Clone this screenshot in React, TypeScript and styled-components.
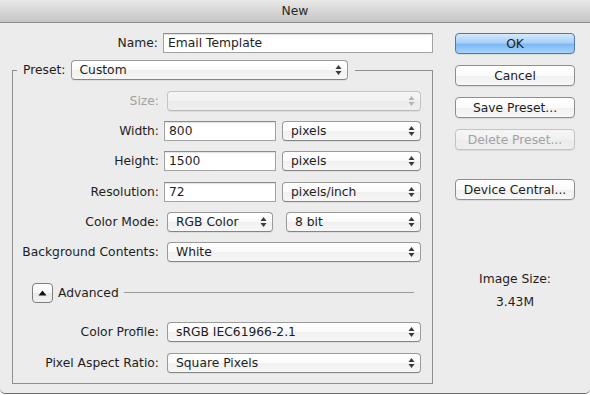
import React from "react";
import { styled, createGlobalStyle } from "styled-components";

const GlobalStyle = createGlobalStyle`
  html, body {
    margin: 0;
    padding: 0;
    background: #ffffff;
  }
  body {
    font-family: "DejaVu Sans", "Liberation Sans", sans-serif;
    font-size: 12.3px;
    color: #1e1e1e;
  }
`;

const Arrows = ({ dim }: { dim?: boolean }) => (
  <svg width="7" height="12" viewBox="0 0 7 12">
    <path d="M3.5 1 L6.5 5 L0.5 5 Z" fill={dim ? "#b4b4b4" : "#3a3a3a"} />
    <path d="M3.5 11 L6.5 7 L0.5 7 Z" fill={dim ? "#b4b4b4" : "#3a3a3a"} />
  </svg>
);

type PopupProps = {
  label?: string;
  width: number;
  disabled?: boolean;
  offset?: number;
};

const Popup = ({ label, width, disabled, offset = 0 }: PopupProps) => (
  <PopupBox $w={width} $off={offset} $disabled={disabled}>
    <span>{label}</span>
    <Arrows dim={disabled} />
  </PopupBox>
);

export default function App() {
  return (
    <>
      <GlobalStyle />
      <Window>
        <TitleBar>New</TitleBar>
        <Body>
          <LeftCol>
            <NameRow>
              <Label>Name:</Label>
              <TextField $w={270}>Email Template</TextField>
            </NameRow>
            <Fieldset>
              <Legend>
                <LegendLabel>Preset:</LegendLabel>
                <Popup label="Custom" width={277} />
              </Legend>
              <Rows>
                <Row>
                  <Label $disabled>Size:</Label>
                  <Popup width={254} offset={3} disabled />
                </Row>
                <Row>
                  <Label>Width:</Label>
                  <TextField $w={112}>800</TextField>
                  <Popup label="pixels" width={139} offset={6} />
                </Row>
                <Row>
                  <Label>Height:</Label>
                  <TextField $w={112}>1500</TextField>
                  <Popup label="pixels" width={139} offset={6} />
                </Row>
                <Row>
                  <Label>Resolution:</Label>
                  <TextField $w={112}>72</TextField>
                  <Popup label="pixels/inch" width={139} offset={6} />
                </Row>
                <Row>
                  <Label>Color Mode:</Label>
                  <Popup label="RGB Color" width={106} offset={3} />
                  <Popup label="8 bit" width={135} offset={13} />
                </Row>
                <Row>
                  <Label>Background Contents:</Label>
                  <Popup label="White" width={254} offset={3} />
                </Row>
              </Rows>
              <AdvancedRow>
                <Disclosure>
                  <svg width="9" height="6" viewBox="0 0 9 6">
                    <path d="M4.5 0.5 L8.5 5.5 L0.5 5.5 Z" fill="#111" />
                  </svg>
                </Disclosure>
                <AdvancedText>Advanced</AdvancedText>
                <Rule />
              </AdvancedRow>
              <AdvancedRows>
                <Row>
                  <Label>Color Profile:</Label>
                  <Popup label="sRGB IEC61966-2.1" width={254} offset={3} />
                </Row>
                <Row>
                  <Label>Pixel Aspect Ratio:</Label>
                  <Popup label="Square Pixels" width={254} offset={3} />
                </Row>
              </AdvancedRows>
            </Fieldset>
          </LeftCol>
          <RightCol>
            <Button $primary>OK</Button>
            <Button>Cancel</Button>
            <Button>Save Preset...</Button>
            <Button $disabled>Delete Preset...</Button>
            <Button $gap={29}>Device Central...</Button>
            <SizeInfo>
              <span>Image Size:</span>
              <span>3.43M</span>
            </SizeInfo>
          </RightCol>
        </Body>
      </Window>
    </>
  );
}

const Window = styled.div`
  width: 590px;
  height: 393px;
  background: #ececec;
  border-bottom: 1px solid #6e6e6e;
  border-radius: 0 0 5px 5px;
  display: flex;
  flex-direction: column;
  overflow: hidden;
`;

const TitleBar = styled.div`
  height: 22px;
  flex: none;
  display: flex;
  align-items: center;
  justify-content: center;
  background: linear-gradient(#e9e9e9, #d3d3d3 60%, #c6c6c6);
  border-bottom: 1px solid #8c8c8c;
  color: #2a2a2a;
`;

const Body = styled.div`
  display: flex;
  padding: 10px 0 0 12px;
  gap: 22px;
`;

const LeftCol = styled.div`
  width: 421px;
  display: flex;
  flex-direction: column;
`;

const NameRow = styled.div`
  display: flex;
  align-items: center;
  height: 20px;
`;

const Label = styled.span<{ $disabled?: boolean }>`
  width: 146px;
  flex: none;
  text-align: right;
  margin-right: 5px;
  color: ${(p) => (p.$disabled ? "#a2a2a2" : "#1e1e1e")};
  white-space: nowrap;
`;

const TextField = styled.div<{ $w: number }>`
  box-sizing: border-box;
  width: ${(p) => p.$w}px;
  height: 20px;
  flex: none;
  background: #fff;
  border: 1px solid #a3a3a3;
  border-top-color: #8a8a8a;
  box-shadow: inset 0 1px 1px rgba(0, 0, 0, 0.12);
  padding: 0 4px;
  display: flex;
  align-items: center;
`;

const Fieldset = styled.fieldset`
  margin: 7px 0 0 0;
  padding: 0 0 10px 0;
  border: 1px solid #8f8f8f;
  min-width: 0;
`;

const Legend = styled.legend`
  margin-left: 4px;
  padding: 0 7px 0 6px;
  display: flex;
  align-items: center;
  gap: 5px;
  height: 20px;
`;

const LegendLabel = styled.span`
  color: #1e1e1e;
`;

const PopupBox = styled.div<{ $w: number; $off: number; $disabled?: boolean }>`
  box-sizing: border-box;
  width: ${(p) => p.$w}px;
  height: 20px;
  flex: none;
  margin-left: ${(p) => p.$off}px;
  border: 1px solid ${(p) => (p.$disabled ? "#c4c4c4" : "#9a9a9a")};
  border-bottom-color: ${(p) => (p.$disabled ? "#bababa" : "#858585")};
  border-radius: 4px;
  background: ${(p) =>
    p.$disabled
      ? "linear-gradient(#f6f6f6, #f1f1f1 50%, #ebebeb 51%, #efefef)"
      : "linear-gradient(#ffffff, #fbfbfb 50%, #f0f0f0 51%, #f7f7f7)"};
  box-shadow: 0 1px 0 rgba(0, 0, 0, 0.06);
  display: flex;
  align-items: center;
  justify-content: space-between;
  padding: 0 5px 0 8px;
  color: #1e1e1e;
  white-space: nowrap;
`;

const Rows = styled.div`
  display: flex;
  flex-direction: column;
  gap: 10.2px;
  padding-top: 11px;
`;

const Row = styled.div`
  display: flex;
  align-items: center;
  height: 20px;
`;

const AdvancedRow = styled.div`
  display: flex;
  align-items: center;
  height: 20px;
  margin-top: 21px;
  padding: 0 18px 0 19px;
`;

const Disclosure = styled.div`
  box-sizing: border-box;
  width: 21px;
  height: 20px;
  flex: none;
  border: 1px solid #7e7e7e;
  border-radius: 4px;
  background: linear-gradient(#ffffff, #f6f6f6 50%, #e9e9e9 51%, #f2f2f2);
  display: flex;
  align-items: center;
  justify-content: center;
`;

const AdvancedText = styled.span`
  margin-left: 5px;
`;

const Rule = styled.div`
  flex: 1;
  height: 1px;
  background: #9a9a9a;
  margin-left: 5px;
`;

const AdvancedRows = styled.div`
  display: flex;
  flex-direction: column;
  gap: 11px;
  margin-top: 19px;
`;

const RightCol = styled.div`
  width: 120px;
  display: flex;
  flex-direction: column;
  gap: 11px;
`;

const Button = styled.div<{ $primary?: boolean; $disabled?: boolean; $gap?: number }>`
  box-sizing: border-box;
  height: 21px;
  margin-top: ${(p) => (p.$gap ? p.$gap - 11 : 0)}px;
  border-radius: 4px;
  border: 1px solid
    ${(p) => (p.$primary ? "#5277b0" : p.$disabled ? "#c2c2c2" : "#8e8e8e")};
  background: ${(p) =>
    p.$primary
      ? "linear-gradient(#d6e9fc, #a8d0f8 45%, #7db8f4 55%, #a6d4fb)"
      : p.$disabled
      ? "linear-gradient(#f6f6f6, #f1f1f1 50%, #ebebeb 51%, #efefef)"
      : "linear-gradient(#ffffff, #fbfbfb 50%, #f0f0f0 51%, #f8f8f8)"};
  box-shadow: 0 1px 0 rgba(0, 0, 0, 0.07);
  color: ${(p) => (p.$disabled ? "#a2a2a2" : "#1e1e1e")};
  display: flex;
  align-items: center;
  justify-content: center;
  white-space: nowrap;
`;

const SizeInfo = styled.div`
  margin-top: 61px;
  display: flex;
  flex-direction: column;
  align-items: center;
  gap: 8px;
  line-height: 15px;
  color: #1e1e1e;
`;
